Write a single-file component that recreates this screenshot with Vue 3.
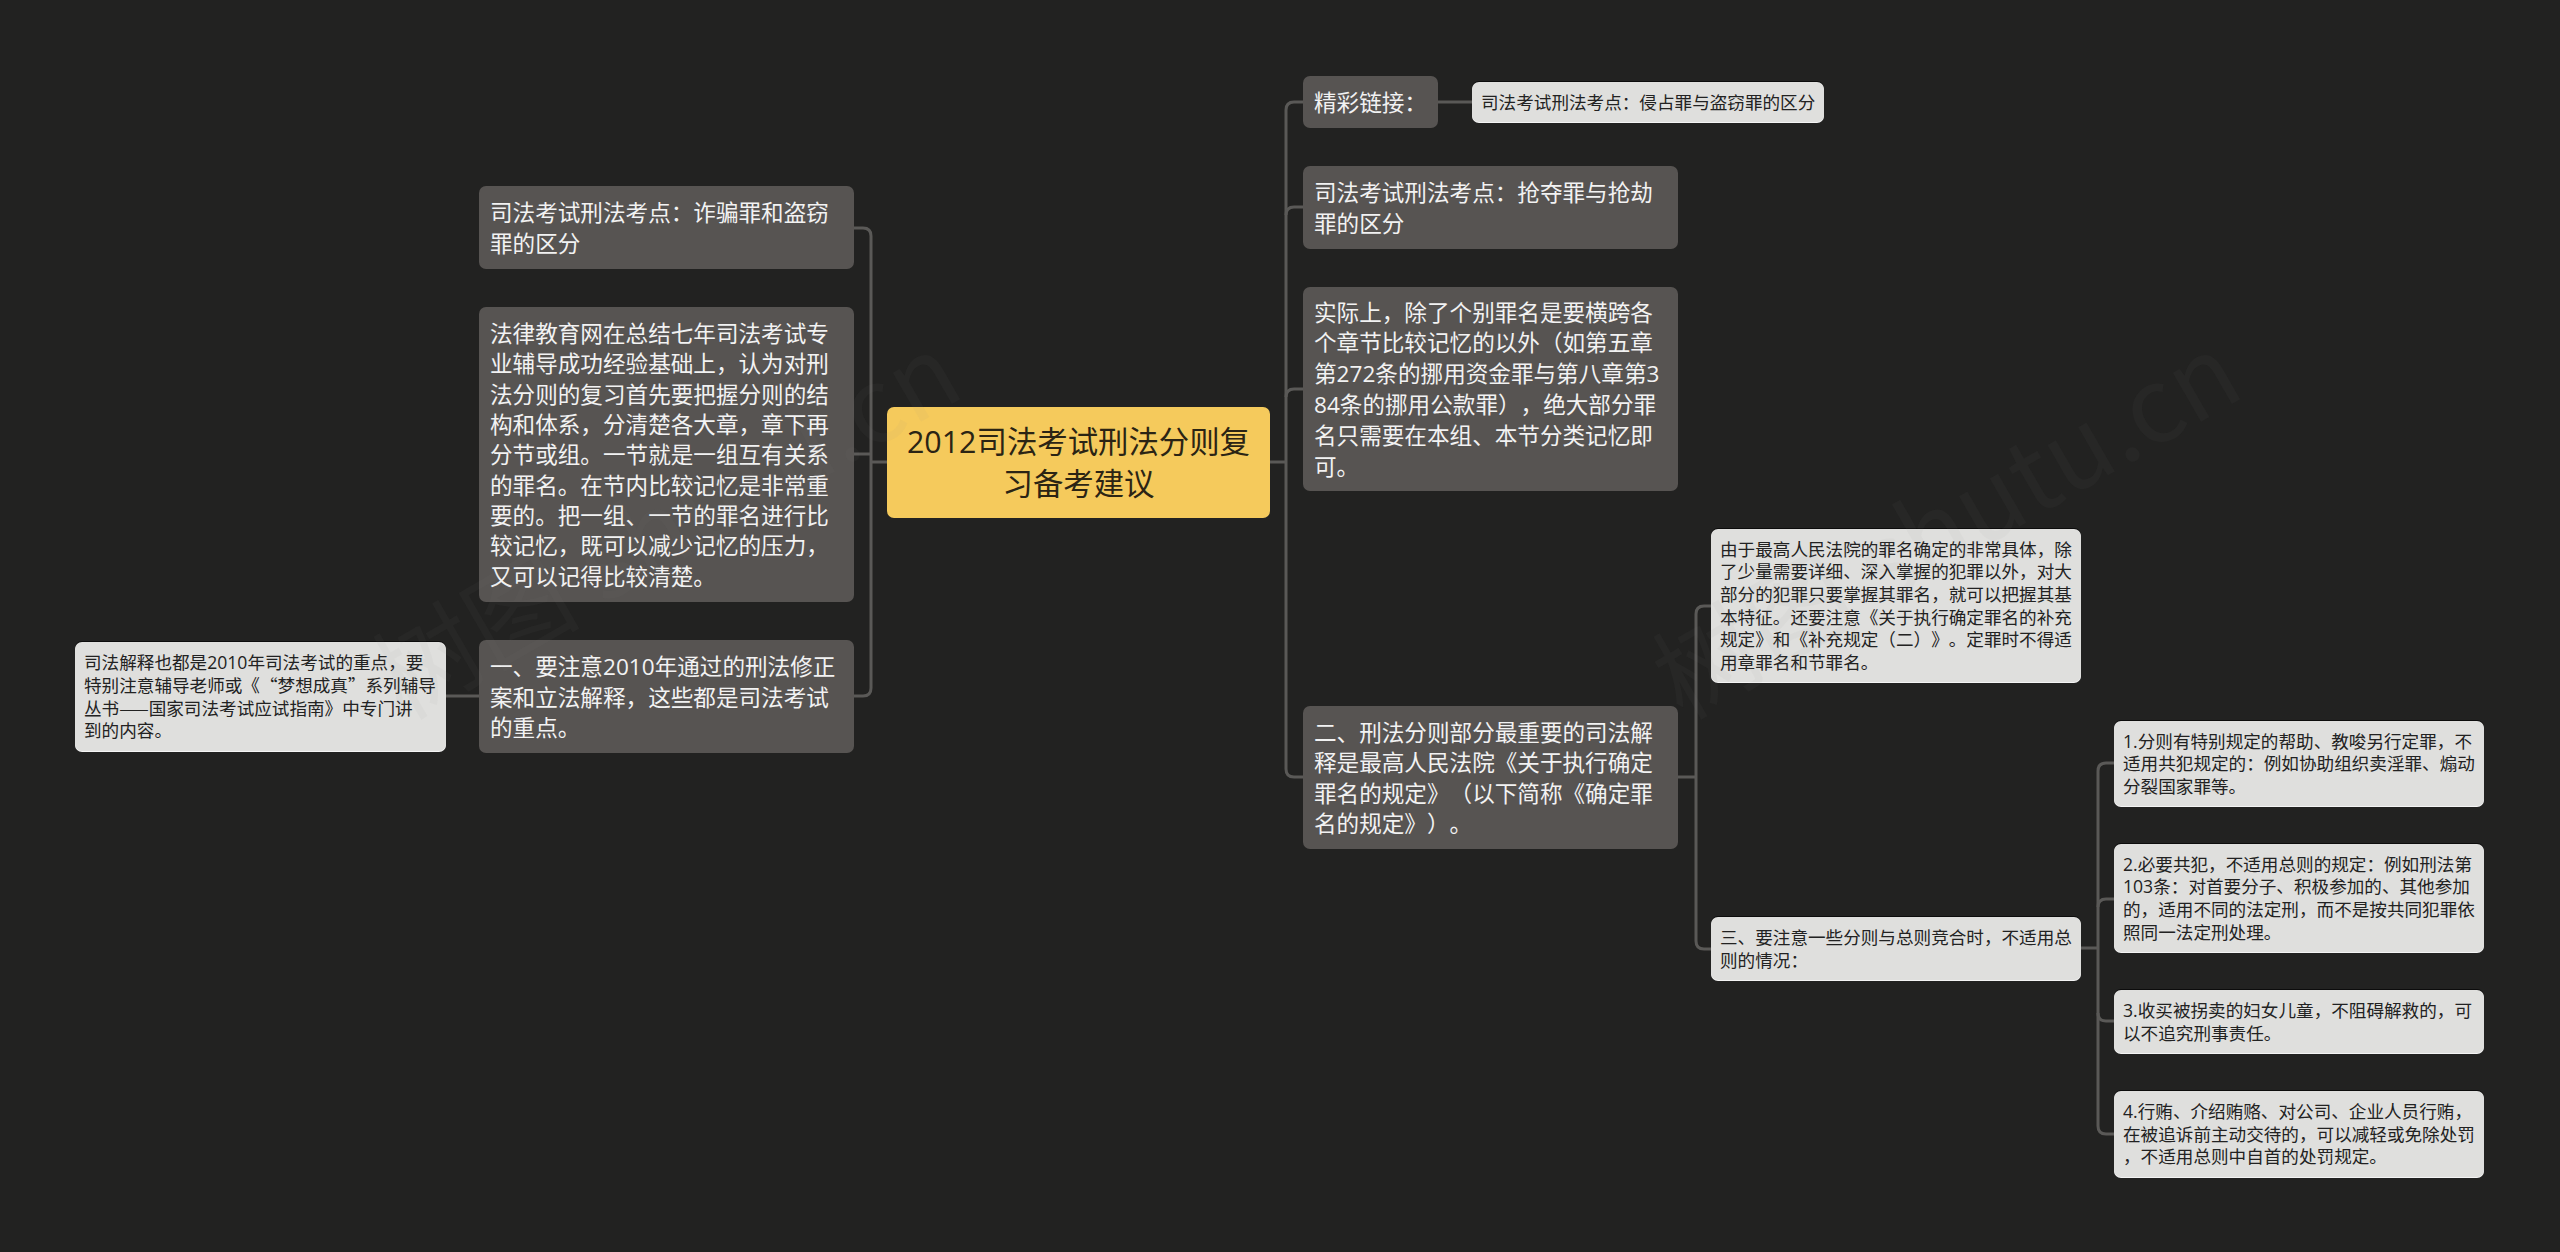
<script setup>
const nodes = [
  { k: 'dark', x: 479, y: 186, w: 375, h: 83, lines: ['司法考试刑法考点：诈骗罪和盗窃', '罪的区分'] },
  { k: 'dark', x: 479, y: 307, w: 375, h: 295, lines: ['法律教育网在总结七年司法考试专', '业辅导成功经验基础上，认为对刑', '法分则的复习首先要把握分则的结', '构和体系，分清楚各大章，章下再', '分节或组。一节就是一组互有关系', '的罪名。在节内比较记忆是非常重', '要的。把一组、一节的罪名进行比', '较记忆，既可以减少记忆的压力，', '又可以记得比较清楚。'] },
  { k: 'dark', x: 479, y: 640, w: 375, h: 113, lines: ['一、要注意2010年通过的刑法修正', '案和立法解释，这些都是司法考试', '的重点。'] },
  { k: 'leaf', x: 75, y: 642, w: 371, h: 109, lines: ['司法解释也都是2010年司法考试的重点，要', '特别注意辅导老师或《“梦想成真”系列辅导', '丛书——国家司法考试应试指南》中专门讲', '到的内容。'] },
  { k: 'root', x: 887, y: 407, w: 383, h: 111, lines: ['2012司法考试刑法分则复', '习备考建议'] },
  { k: 'dark', x: 1303, y: 76, w: 135, h: 52, lines: ['精彩链接：'] },
  { k: 'leaf', x: 1472, y: 82, w: 352, h: 40, lines: ['司法考试刑法考点：侵占罪与盗窃罪的区分'] },
  { k: 'dark', x: 1303, y: 166, w: 375, h: 83, lines: ['司法考试刑法考点：抢夺罪与抢劫', '罪的区分'] },
  { k: 'dark', x: 1303, y: 287, w: 375, h: 204, lines: ['实际上，除了个别罪名是要横跨各', '个章节比较记忆的以外（如第五章', '第272条的挪用资金罪与第八章第3', '84条的挪用公款罪），绝大部分罪', '名只需要在本组、本节分类记忆即', '可。'] },
  { k: 'dark', x: 1303, y: 706, w: 375, h: 143, lines: ['二、刑法分则部分最重要的司法解', '释是最高人民法院《关于执行确定', '罪名的规定》（以下简称《确定罪', '名的规定》）。'] },
  { k: 'leaf', x: 1711, y: 529, w: 370, h: 153, lines: ['由于最高人民法院的罪名确定的非常具体，除', '了少量需要详细、深入掌握的犯罪以外，对大', '部分的犯罪只要掌握其罪名，就可以把握其基', '本特征。还要注意《关于执行确定罪名的补充', '规定》和《补充规定（二）》。定罪时不得适', '用章罪名和节罪名。'] },
  { k: 'leaf', x: 1711, y: 917, w: 370, h: 63, lines: ['三、要注意一些分则与总则竞合时，不适用总', '则的情况：'] },
  { k: 'leaf', x: 2114, y: 721, w: 370, h: 85, lines: ['1.分则有特别规定的帮助、教唆另行定罪，不', '适用共犯规定的：例如协助组织卖淫罪、煽动', '分裂国家罪等。'] },
  { k: 'leaf', x: 2114, y: 844, w: 370, h: 108, lines: ['2.必要共犯，不适用总则的规定：例如刑法第', '103条：对首要分子、积极参加的、其他参加', '的，适用不同的法定刑，而不是按共同犯罪依', '照同一法定刑处理。'] },
  { k: 'leaf', x: 2114, y: 990, w: 370, h: 63, lines: ['3.收买被拐卖的妇女儿童，不阻碍解救的，可', '以不追究刑事责任。'] },
  { k: 'leaf', x: 2114, y: 1091, w: 370, h: 86, lines: ['4.行贿、介绍贿赂、对公司、企业人员行贿，', '在被追诉前主动交待的，可以减轻或免除处罚', '，不适用总则中自首的处罚规定。'] },
]

const links = [
  'M854 228H863Q871 228 871 236V688Q871 696 863 696H854',
  'M854 454H871',
  'M871 462H887',
  'M446 696H479',
  'M1270 462H1286',
  'M1303 102H1294Q1286 102 1286 110V769Q1286 777 1294 777H1303',
  'M1303 207H1294Q1286 207 1286 215',
  'M1303 389H1294Q1286 389 1286 397',
  'M1438 102H1472',
  'M1678 777H1696',
  'M1711 606H1704Q1696 606 1696 614V941Q1696 949 1704 949H1711',
  'M2081 948H2098',
  'M2114 763H2106Q2098 763 2098 771V1126Q2098 1134 2106 1134H2114',
  'M2114 899H2106Q2098 899 2098 907',
  'M2114 1021H2106Q2098 1021 2098 1013',
]

const marks = [
  { x: 380, y: 630 },
  { x: 1660, y: 630 },
]

function box(n) {
  return { left: n.x + 'px', top: n.y + 'px', width: n.w + 'px', height: n.h + 'px' }
}

function parts(line) {
  return line.split(/([\d.]+)/).filter(Boolean).map((t) => ({ t, num: /^[\d.]+$/.test(t) }))
}
</script>

<template>
  <div class="canvas">
    <svg class="links" width="2560" height="1252" viewBox="0 0 2560 1252">
      <path v-for="(d, i) in links" :key="i" :d="d" />
    </svg>
    <div v-for="(n, i) in nodes" :key="i" class="node" :class="n.k" :style="box(n)">
      <div v-for="(l, j) in n.lines" :key="j" class="line"><span v-for="(p, q) in parts(l)" :key="q" :class="{ num: p.num }">{{ p.t }}</span></div>
    </div>
    <div
      v-for="(m, i) in marks"
      :key="'m' + i"
      class="mark"
      :style="{ left: m.x + 'px', top: m.y + 'px' }"
    >树图 shutu.cn</div>
  </div>
</template>

<style scoped>
.canvas {
  position: relative;
  width: 2560px;
  height: 1252px;
  overflow: hidden;
  background: #222221;
  font-family: "Noto Sans CJK SC", "Noto Sans", sans-serif;
  text-spacing-trim: space-all;
}
.links {
  position: absolute;
  left: 0;
  top: 0;
}
.links path {
  fill: none;
  stroke: #5a5957;
  stroke-width: 3;
}
.node {
  position: absolute;
  box-sizing: border-box;
  display: flex;
  flex-direction: column;
  justify-content: center;
  border-radius: 7px;
}
.line {
  white-space: nowrap;
}
.num {
  font-family: "Open Sans", "Noto Sans", sans-serif;
}
.dark {
  padding: 0 11px;
  background: #575452;
  color: #f2f2f2;
  font-size: 22.6px;
  line-height: 30.3px;
}
.leaf {
  padding: 0 9px;
  background: #dfdfdd;
  color: #222;
  font-size: 17.6px;
  line-height: 22.6px;
  box-shadow: 0 1px 0 #f4f4f4, 0 -1px 0 #0c0c0c;
}
.root {
  padding: 0 11px 3px;
  background: #f5ca5c;
  color: #2b2414;
  font-size: 30.4px;
  line-height: 40px;
  text-align: center;
}
.mark {
  position: absolute;
  font-family: "Noto Sans CJK SC", "Noto Sans", sans-serif;
  font-size: 104px;
  line-height: 1;
  white-space: nowrap;
  color: rgba(128, 128, 128, 0.05);
  transform: rotate(-30deg);
  transform-origin: left center;
  pointer-events: none;
}
</style>

<style>
html,
body {
  margin: 0;
  background: #222221;
}
</style>
